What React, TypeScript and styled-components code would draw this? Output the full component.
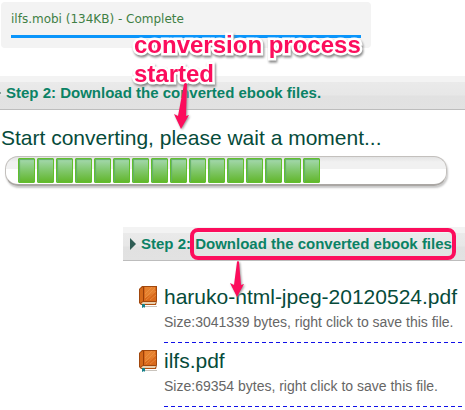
import React from "react";
import styled, { createGlobalStyle } from "styled-components";

const PINK = "#fc0d5c";

const GlobalStyle = createGlobalStyle`
  * { box-sizing: border-box; }
  body {
    margin: 0;
    background: #fff;
    font-family: "Liberation Sans", Arial, sans-serif;
    overflow-x: hidden;
  }
`;

const Page = styled.main`
  position: relative;
  padding-top: 2px;
`;

const UploadCard = styled.section`
  max-width: 370px;
  height: 46px;
  margin-left: 1px;
  padding: 10px 10px 0;
  border-radius: 4px;
  background: #f3f3f3;
`;

const UploadName = styled.div`
  font: 12px/14px "DejaVu Sans", Verdana, sans-serif;
  color: #3f7f45;
  white-space: nowrap;
`;

const UploadBar = styled.div`
  height: 3px;
  margin-top: 9px;
  background: #0a95fb;
`;

const StepHeader = styled.h2`
  display: flex;
  align-items: center;
  height: 34px;
  margin: 0;
  border-bottom: 1px solid #bdbdbd;
  background: linear-gradient(#f3f3f3 0 6px, #eaeaea 6px, #e7e7e7 19px, #e1e1e1 20px, #e2e2e2);
  font-size: 15px;
  line-height: 20px;
  font-weight: bold;
  color: #0b8265;
  white-space: nowrap;
`;

const Marker = styled.svg`
  flex: none;
  width: 6px;
  height: 12px;
  margin-right: 5px;
  fill: #2f5d55;
`;

const ConvertSection = styled.section`
  margin-top: 28px;

  ${StepHeader} ${Marker} {
    margin-left: -5px;
  }
`;

const Status = styled.p`
  margin: 15px 0 0 1px;
  font-size: 21px;
  line-height: 26px;
  color: #064b3a;
  white-space: nowrap;
`;

const Progress = styled.div`
  display: flex;
  gap: 2px;
  max-width: 442px;
  height: 30px;
  margin: 5px 18px 0 5px;
  padding: 1px 12px;
  border: 1px solid #c3c0bd;
  border-bottom: 2px solid #aaa7a4;
  border-radius: 13px;
  background: linear-gradient(#e3e3e3, #f1f1f1 5px 12px, #fff 12px);
  box-shadow: 1px 2px 2px #c8c8c8;
`;

const Segment = styled.span`
  width: 17px;
  height: 25px;
  border: 1px solid #62bf2c;
  border-radius: 1px;
  background: linear-gradient(#a5d8b0, #84c973 45%, #62b72c);
  box-shadow: inset 1px 1px 1px #62b06a;
`;

const ResultSection = styled.section`
  margin: 41px 0 0 123px;

  ${StepHeader} {
    padding-left: 7px;
  }
`;

const Highlight = styled.span`
  position: relative;

  &::after {
    content: "";
    position: absolute;
    inset: -7px -4px -8px -5px;
    border: 4px solid ${PINK};
    border-radius: 8px;
  }
`;

const FileList = styled.ul`
  margin: 0;
  padding: 23px 2px 0 16px;
  list-style: none;
`;

const FileRow = styled.li`
  display: flex;
  gap: 6px;
  height: 64px;
`;

const BookIcon = styled.svg`
  flex: none;
  width: 19px;
  height: 22px;
  margin-top: 2px;
`;

const FileInfo = styled.div`
  flex: 1;
  height: 59px;
  white-space: nowrap;
  background: repeating-linear-gradient(90deg, #1010e8 0 4px, transparent 4px 7px) bottom / 100% 1px no-repeat;
`;

const FileLink = styled.a`
  display: block;
  font-size: 21px;
  line-height: 26px;
  color: #064b3a;
  text-decoration: none;
`;

const FileSize = styled.p`
  margin: 3px 0 0;
  font-size: 14px;
  line-height: 18px;
  color: #666;
`;

const Callout = styled.p`
  position: absolute;
  top: 30px;
  left: 134px;
  width: 250px;
  margin: 0;
  font-size: 24px;
  line-height: 29px;
  font-weight: bold;
  color: ${PINK};
  paint-order: stroke fill;
  -webkit-text-stroke: 5px #fff;
  filter: drop-shadow(1px 2px 1px #888);
`;

const Arrow = styled.svg<{ $x: number; $y: number }>`
  position: absolute;
  left: ${(p) => p.$x}px;
  top: ${(p) => p.$y}px;
  fill: ${PINK};
  filter: drop-shadow(1px 1px 1px #999);
`;

const Triangle = () => (
  <Marker viewBox="0 0 6 12" aria-hidden="true">
    <path d="M0 0 6 6 0 12Z" />
  </Marker>
);

const Book = () => (
  <BookIcon viewBox="0 0 19 22" aria-hidden="true">
    <path d="M3 20h15v1H4z" fill="#c9c4bd" />
    <path d="M1 2 3 0h15v15l-1 4H2l-2-2V3z" fill="#a1480d" />
    <path d="M1 3 4 1v14l-3 2z" fill="#d4691a" />
    <path d="M5 1h12v14H5z" fill="#d9691b" />
    <path d="M6 1h10v5L6 12z" fill="#e5812f" />
    <path d="M6 8 13 1M6 12 16 2M7 14 17 5M11 14l6-5" stroke="#f0974c" strokeWidth="0.6" />
    <path d="M4.5 1v14" stroke="#9a3f08" />
    <path d="M2 17.5 4 16h13l-1 2H3z" fill="#e9cfae" />
    <path d="M2 18.5h15" stroke="#b0500f" />
    <path d="M3 18h3v4l-1-1-2 1z" fill="#17818a" />
  </BookIcon>
);

const files = [
  { name: "haruko-html-jpeg-20120524.pdf", bytes: 3041339 },
  { name: "ilfs.pdf", bytes: 69354 },
];

export default function App() {
  return (
    <Page>
      <GlobalStyle />
      <UploadCard>
        <UploadName>ilfs.mobi (134KB) - Complete</UploadName>
        <UploadBar />
      </UploadCard>

      <ConvertSection>
        <StepHeader>
          <Triangle />
          Step 2: Download the converted ebook files.
        </StepHeader>
        <Status>Start converting, please wait a moment...</Status>
        <Progress role="progressbar" aria-label="Conversion progress">
          {Array.from({ length: 16 }, (_, i) => (
            <Segment key={i} />
          ))}
        </Progress>
      </ConvertSection>

      <ResultSection>
        <StepHeader>
          <Triangle />
          <span>
            Step 2: <Highlight>Download the converted ebook files</Highlight>
          </span>
        </StepHeader>
        <FileList>
          {files.map((file) => (
            <FileRow key={file.name}>
              <Book />
              <FileInfo>
                <FileLink href={`#${file.name}`}>{file.name}</FileLink>
                <FileSize>Size:{file.bytes} bytes, right click to save this file.</FileSize>
              </FileInfo>
            </FileRow>
          ))}
        </FileList>
      </ResultSection>

      <Callout>conversion process started</Callout>
      <Arrow $x={173} $y={83} width="17" height="47" viewBox="0 0 17 47" aria-hidden="true">
        <path d="M11 1Q13-1 14 1L13 33 16 32 8 46 1 31 5 33Z" />
      </Arrow>
      <Arrow $x={230} $y={261} width="15" height="37" viewBox="0 0 15 37" aria-hidden="true">
        <path d="M7 1Q8-1 9 1L11 24 14 23 7 36 0 22 4 24Z" />
      </Arrow>
    </Page>
  );
}
